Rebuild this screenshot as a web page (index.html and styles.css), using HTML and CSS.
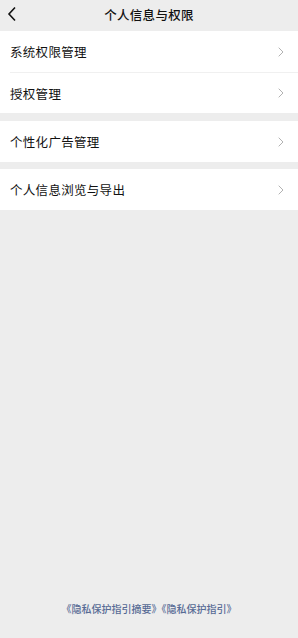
FILE: index.html
```html
<!DOCTYPE html>
<html lang="zh-CN">
<head>
    <meta charset="UTF-8">
    <meta name="viewport" content="width=device-width, initial-scale=1.0">
    <title>个人信息与权限</title>
    <link rel="stylesheet" href="styles.css">
</head>
<body>
    <div class="header">
        <span class="back">
            <svg width="10" height="16" viewBox="0 0 10 16"><path d="M8 1.5 L2 8 L8 14.5" fill="none" stroke="#111" stroke-width="1.6"/></svg>
        </span>
        <h1>个人信息与权限</h1>
    </div>

    <div class="group">
        <div class="item">
            <span>系统权限管理</span>
            <svg class="arrow" width="6" height="10" viewBox="0 0 6 10"><path d="M0.7 0.7 L5 5 L0.7 9.3" fill="none" stroke="#b2b2b2" stroke-width="1"/></svg>
        </div>
        <div class="item">
            <span>授权管理</span>
            <svg class="arrow" width="6" height="10" viewBox="0 0 6 10"><path d="M0.7 0.7 L5 5 L0.7 9.3" fill="none" stroke="#b2b2b2" stroke-width="1"/></svg>
        </div>
    </div>

    <div class="group">
        <div class="item">
            <span>个性化广告管理</span>
            <svg class="arrow" width="6" height="10" viewBox="0 0 6 10"><path d="M0.7 0.7 L5 5 L0.7 9.3" fill="none" stroke="#b2b2b2" stroke-width="1"/></svg>
        </div>
    </div>

    <div class="group last">
        <div class="item">
            <span>个人信息浏览与导出</span>
            <svg class="arrow" width="6" height="10" viewBox="0 0 6 10"><path d="M0.7 0.7 L5 5 L0.7 9.3" fill="none" stroke="#b2b2b2" stroke-width="1"/></svg>
        </div>
    </div>

    <div class="footer">
        <a href="#">《隐私保护指引摘要》</a><a href="#">《隐私保护指引》</a>
    </div>
</body>
</html>
```

FILE: styles.css
```css
body {
    margin: 0;
    height: 638px;
    display: flex;
    flex-direction: column;
    background: #ededed;
    font-family: "Noto Sans CJK SC", "Noto Sans", sans-serif;
    color: #111;
}

.header {
    height: 29px;
    padding-bottom: 2px;
    display: flex;
    align-items: center;
    justify-content: center;
    position: relative;
}

.header h1 {
    margin: 0;
    font-size: 12.5px;
    font-weight: 500;
    letter-spacing: 0.3px;
}

.back {
    position: absolute;
    left: 7px;
    top: 6px;
    display: flex;
}

.group {
    background: #fff;
    margin-bottom: 8px;
}

.group + .group {
    margin-bottom: 7px;
}

.item {
    height: 41px;
    display: flex;
    align-items: center;
    justify-content: space-between;
    padding: 0 14px 0 10px;
    font-size: 12.5px;
    letter-spacing: 0.3px;
}

.item + .item {
    border-top: 1px solid #f0f0f0;
    height: 40px;
    margin-left: 10px;
    padding-left: 0;
}

.arrow {
    display: block;
}

.footer {
    margin-top: auto;
    padding-bottom: 22px;
    text-align: center;
    font-size: 10px;
    font-weight: 500;
}

.footer a {
    color: #576b95;
    text-decoration: none;
}
```
